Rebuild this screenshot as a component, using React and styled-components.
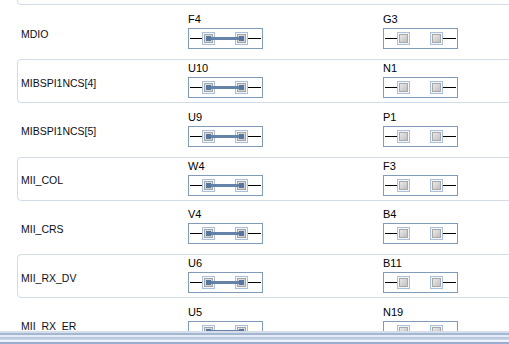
import styled, { createGlobalStyle } from 'styled-components';

const GlobalStyle = createGlobalStyle`
  html, body { margin: 0; padding: 0; background: #fff; overflow: hidden; }
  body { font-family: "Liberation Sans", Arial, sans-serif; }
`;

const Page = styled.div`
  width: 509px;
  height: 344px;
  display: flex;
  flex-direction: column;
  overflow: hidden;
`;

const Viewport = styled.div`
  height: 331px;
  overflow: hidden;
`;

const List = styled.div`
  display: flex;
  flex-direction: column;
  gap: 4.8px;
  margin-top: -38.6px;
  margin-left: 17px;
  width: 520px;
`;

const Row = styled.div`
  display: grid;
  grid-template-columns: 170px 195px 1fr;
  height: 42px;
  border: 1px solid ${p => (p.$boxed ? '#d3dbe5' : 'transparent')};
  border-radius: 4px;
`;

const Name = styled.div`
  display: flex;
  align-items: center;
  padding: 3px 0 0 3px;
  font-size: 10.5px;
  color: #0b0e18;
`;

const PinCell = styled.div`
  display: flex;
  flex-direction: column;
  align-items: flex-start;
  padding-top: 2px;
`;

const PinLabel = styled.div`
  font-size: 11px;
  line-height: 13px;
  height: 13px;
  color: #000;
`;

const Control = styled.div`
  margin-top: 2px;
  width: 73px;
  height: 19px;
  border: 1px solid #7f9bb7;
  background: #fff;
  display: flex;
`;

const Bar = styled.div`
  height: 13px;
  background: linear-gradient(
    to bottom,
    #d6dee9 0px, #d6dee9 2px,
    #a3b6d2 2px, #a3b6d2 4px,
    #e4ebf4 4px, #e4ebf4 6px,
    #b9c9e0 6px, #b9c9e0 8px,
    #ccd7e9 8px, #ccd7e9 9px,
    #eef2f8 9px, #eef2f8 11px,
    #99add0 11px, #99add0 13px
  );
`;

function Square({ x, linked }) {
  return (
    <g>
      <rect x={x + 0.5} y={3.5} width={12} height={12} fill="#f4f6f9" stroke="#a9bfdc" />
      <rect
        x={x + 2.5}
        y={5.5}
        width={8}
        height={8}
        fill={linked ? 'url(#sqOn)' : 'url(#sqOff)'}
        stroke={linked ? '#a4a4a4' : '#a8a8a8'}
      />
    </g>
  );
}

function Jumper({ linked }) {
  return (
    <Control>
      <svg width="73" height="19" viewBox="0 0 73 19">
        <defs>
          <linearGradient id="sqOff" x1="0" y1="0" x2="1" y2="1">
            <stop offset="0" stopColor="#ececec" />
            <stop offset="1" stopColor="#bdbdbd" />
          </linearGradient>
          <linearGradient id="sqOn" x1="0" y1="0" x2="1" y2="1">
            <stop offset="0" stopColor="#e2e2e2" />
            <stop offset="1" stopColor="#cdcdcd" />
          </linearGradient>
        </defs>
        <rect x="1" y="9" width="12" height="1" fill="#000" />
        <rect x="59" y="9" width="13" height="1" fill="#000" />
        <Square x={13} linked={linked} />
        <Square x={46} linked={linked} />
        {linked && (
          <g>
            <rect x="19" y="8" width="34" height="3" fill="#6583a9" />
            <rect x="17" y="7" width="5" height="5" fill="#57779f" />
            <rect x="50" y="7" width="5" height="5" fill="#57779f" />
          </g>
        )}
      </svg>
    </Control>
  );
}

const rows = [
  { name: 'MDCLK', a: 'V5', b: 'T4' },
  { name: 'MDIO', a: 'F4', b: 'G3' },
  { name: 'MIBSPI1NCS[4]', a: 'U10', b: 'N1' },
  { name: 'MIBSPI1NCS[5]', a: 'U9', b: 'P1' },
  { name: 'MII_COL', a: 'W4', b: 'F3' },
  { name: 'MII_CRS', a: 'V4', b: 'B4' },
  { name: 'MII_RX_DV', a: 'U6', b: 'B11' },
  { name: 'MII_RX_ER', a: 'U5', b: 'N19' },
];

export default function App() {
  return (
    <Page>
      <GlobalStyle />
      <Viewport>
        <List>
          {rows.map((r, i) => (
            <Row key={r.name} $boxed={i % 2 === 0}>
              <Name>{r.name}</Name>
              <PinCell>
                <PinLabel>{r.a}</PinLabel>
                <Jumper linked />
              </PinCell>
              <PinCell>
                <PinLabel>{r.b}</PinLabel>
                <Jumper linked={false} />
              </PinCell>
            </Row>
          ))}
        </List>
      </Viewport>
      <Bar />
    </Page>
  );
}
